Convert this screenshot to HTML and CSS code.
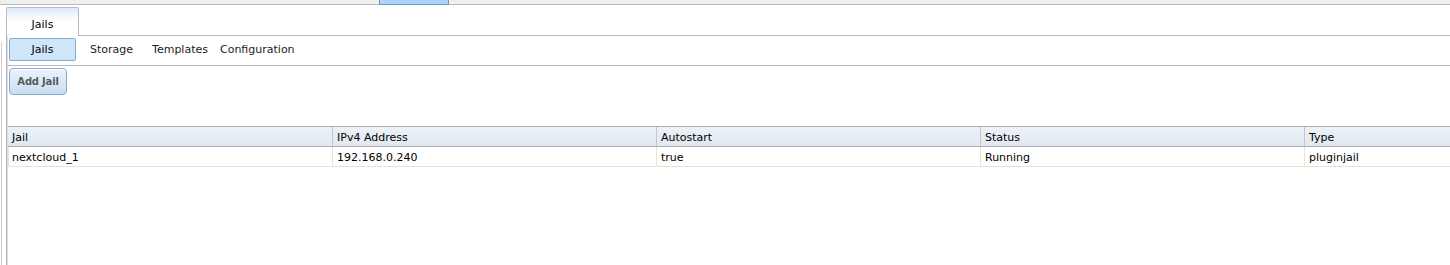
FILE: index.html
```html
<!DOCTYPE html>
<html>
<head>
<meta charset="utf-8">
<link rel="stylesheet" href="styles.css">
</head>
<body>
<div class="topbar"><div class="topbar-tab"></div></div>
<div class="main">
  <div class="gutter"></div>
  <div class="panel">
    <div class="tabrow">
      <div class="tab">Jails</div>
      <div class="tabfill"></div>
    </div>
    <div class="body">
      <div class="subnav">
        <div class="subbtn active">Jails</div>
        <div class="subbtn storage">Storage</div>
        <div class="subbtn templates">Templates</div>
        <div class="subbtn config">Configuration</div>
      </div>
      <div class="actions">
        <div class="addbtn">Add Jail</div>
      </div>
      <div class="grid">
        <div class="hcell">Jail</div>
        <div class="hcell">IPv4 Address</div>
        <div class="hcell">Autostart</div>
        <div class="hcell">Status</div>
        <div class="hcell last">Type</div>
        <div class="cell first">nextcloud_1</div>
        <div class="cell">192.168.0.240</div>
        <div class="cell">true</div>
        <div class="cell">Running</div>
        <div class="cell last">pluginjail</div>
      </div>
    </div>
  </div>
</div>
</body>
</html>
```

FILE: styles.css
```css
* { box-sizing: border-box; }
html, body { margin: 0; padding: 0; background: #fff; }
body {
  font-family: "DejaVu Sans", Verdana, sans-serif;
  font-size: 11px;
  color: #000;
  width: 1450px;
  height: 265px;
  overflow: hidden;
}
.topbar {
  height: 5px;
  background: #efefef;
  border-bottom: 1px solid #b4bbc6;
  display: flex;
  padding-left: 379px;
}
.topbar-tab {
  width: 70px;
  height: 5px;
  background: #add4f8;
  border: 1px solid #6b9bc9;
  border-top: none;
}
.main {
  display: flex;
  height: 260px;
}
.gutter {
  width: 5px;
  margin-left: 1px;
  margin-top: 37px;
  border-left: 1px solid #d2d2d2;
}
.panel {
  flex: 1;
  margin-top: 2px;
  display: flex;
  flex-direction: column;
  min-width: 0;
}
.tabrow {
  display: flex;
  height: 29px;
}
.tab {
  width: 73px;
  height: 29px;
  border: 1px solid #b4bbc6;
  border-bottom: none;
  border-radius: 2px 2px 0 0;
  background: linear-gradient(to bottom, #dbe9f8 0px, #f4f8fd 8px, #fff 14px);
  text-align: center;
  padding-top: 10px;
  line-height: 13px;
}
.tabfill {
  flex: 1;
  height: 29px;
  border-bottom: 1px solid #b4bbc6;
}
.body {
  flex: 1;
  border-left: 1px solid #b0b5bd;
  box-shadow: inset 1px 0 0 #dcdfe3;
  display: flex;
  flex-direction: column;
}
.subnav {
  height: 30px;
  border-bottom: 1px solid #b4bbc6;
  display: flex;
  align-items: flex-start;
  padding-top: 2px;
}
.subbtn {
  height: 23px;
  line-height: 21px;
  border: 1px solid transparent;
  color: #222;
}
.subbtn.active {
  margin-left: 2px;
  width: 67px;
  text-align: center;
  background: #cfe5fa;
  border: 1px solid #86aed4;
  border-radius: 2px;
  color: #000;
}
.subbtn.storage { margin-left: 13px; }
.subbtn.templates { margin-left: 17px; }
.subbtn.config { margin-left: 10px; }
.actions {
  height: 60px;
  padding: 2px 0 0 2px;
}
.addbtn {
  width: 58px;
  height: 27px;
  border: 1px solid #8cabcb;
  border-radius: 4px;
  background: linear-gradient(to bottom, #eaf3fc 0%, #d9e9f8 50%, #c8ddf2 100%);
  font-weight: bold;
  color: #5a5a5a;
  text-align: center;
  line-height: 25px;
  font-size: 10px;
  letter-spacing: -0.2px;
  box-shadow: inset 0 1px 0 #fff;
}
.grid {
  display: grid;
  grid-template-columns: 325px 324px 324px 324px 1fr;
  border-top: 1px solid #b1b1b1;
  margin-left: 1px;
}
.hcell {
  height: 20px;
  line-height: 19px;
  padding: 1px 0 0 4px;
  background: linear-gradient(to bottom, #eef2f7 0%, #dfe7f0 100%);
  border-right: 1px solid #c2c7cd;
  border-bottom: 1px solid #a9adb2;
  white-space: nowrap;
}
.hcell.last, .cell.last { border-right: none; }
.cell {
  height: 20px;
  line-height: 19px;
  padding: 1px 0 0 4px;
  border-right: 1px solid #f1dfcf;
  border-bottom: 1px solid #f1dfcf;
  white-space: nowrap;
}
.cell.first {
  border-left: 1px solid #f1dfcf;
  padding-left: 3px;
}
```
